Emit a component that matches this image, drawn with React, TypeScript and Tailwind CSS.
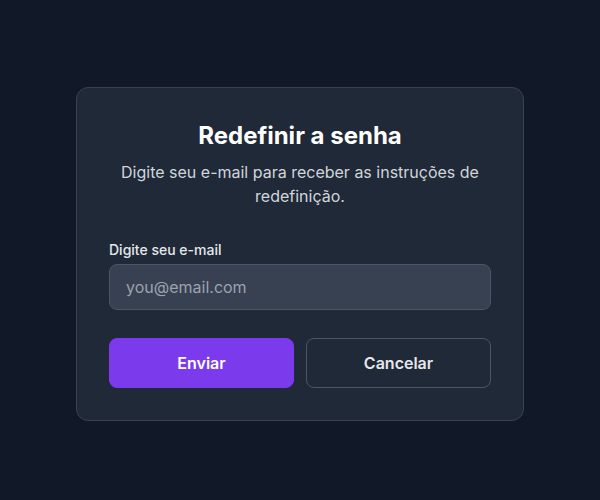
import React from "react";

export default function App() {
  return (
    <div
      className="min-h-screen w-full bg-[#111827] flex items-center justify-center"
      style={{ fontFamily: "Inter, 'Liberation Sans', sans-serif" }}
    >
      <div className="w-[448px] rounded-xl border border-[#374151] bg-[#1f2937] p-8 mt-[7px]">
        <h1 className="text-center text-2xl leading-8 font-bold text-white">Redefinir a senha</h1>
        <p className="mt-2 text-center text-base leading-6 text-[#d1d5db]">
          Digite seu e-mail para receber as instruções de redefinição.
        </p>
        <div className="mt-8">
          <label className="block text-sm leading-5 font-medium text-[#e5e7eb]">Digite seu e-mail</label>
          <input
            type="email"
            placeholder="you@email.com"
            className="mt-1 block w-full rounded-lg border border-[#4b5563] bg-[#374151] px-4 py-2.5 text-base leading-6 text-white placeholder:text-[#9ca3af] outline-none"
          />
        </div>
        <div className="mt-7 flex gap-3">
          <button className="flex-1 rounded-lg border border-[#7c3aed] bg-[#7c3aed] py-3 text-base leading-6 font-semibold text-white">
            Enviar
          </button>
          <button className="flex-1 rounded-lg border border-[#4b5563] bg-transparent py-3 text-base leading-6 font-semibold text-[#e5e7eb]">
            Cancelar
          </button>
        </div>
      </div>
    </div>
  );
}
